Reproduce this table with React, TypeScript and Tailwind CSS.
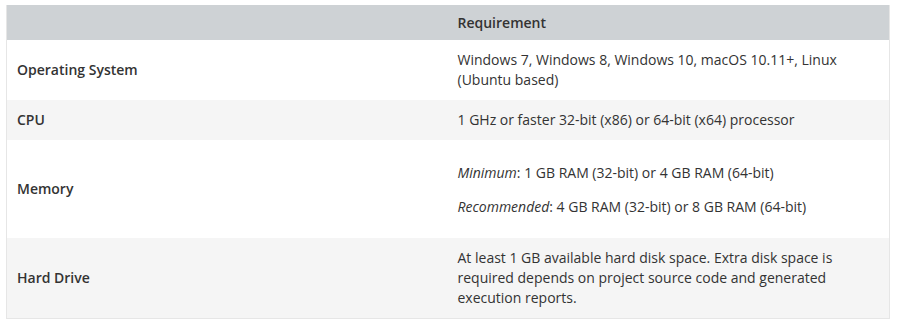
export default function App() {
  return (
    <div className="bg-white w-[901px] h-[324px] pt-[5px] pl-[6px]" style={{ fontFamily: '"Open Sans", sans-serif' }}>
      <table className="w-[884px] border-collapse text-[14px] leading-[20px] text-[#333333] border-x border-b border-[#e6e6e6] table-fixed">
        <thead>
          <tr className="bg-[#ced2d5] h-[35px]">
            <th className="w-[440px] pl-[10px] pr-[11px] text-left font-semibold"></th>
            <th className="px-[11px] text-left font-semibold">Requirement</th>
          </tr>
        </thead>
        <tbody>
          <tr className="bg-white h-[60px]">
            <td className="pl-[10px] pr-[11px] font-semibold">Operating System</td>
            <td className="px-[11px] py-[10px]">
              Windows 7, Windows 8, Windows 10, macOS 10.11+, Linux (Ubuntu based)
            </td>
          </tr>
          <tr className="bg-[#f5f5f5] h-[40px]">
            <td className="pl-[10px] pr-[11px] font-semibold">CPU</td>
            <td className="px-[11px] py-[10px]">1 GHz or faster 32-bit (x86) or 64-bit (x64) processor</td>
          </tr>
          <tr className="bg-white h-[98px]">
            <td className="pl-[10px] pr-[11px] font-semibold">Memory</td>
            <td className="px-[11px] py-[10px]">
              <p className="mt-[12px] mb-[14px]">
                <em>Minimum</em>: 1 GB RAM (32-bit) or 4 GB RAM (64-bit)
              </p>
              <p className="mb-[11px]">
                <em>Recommended</em>: 4 GB RAM (32-bit) or 8 GB RAM (64-bit)
              </p>
            </td>
          </tr>
          <tr className="bg-[#f5f5f5] h-[80px]">
            <td className="pl-[10px] pr-[11px] font-semibold">Hard Drive</td>
            <td className="px-[11px] py-[10px]">
              At least 1 GB available hard disk space. Extra disk space is required depends on project source code and
              generated execution reports.
            </td>
          </tr>
        </tbody>
      </table>
    </div>
  );
}
